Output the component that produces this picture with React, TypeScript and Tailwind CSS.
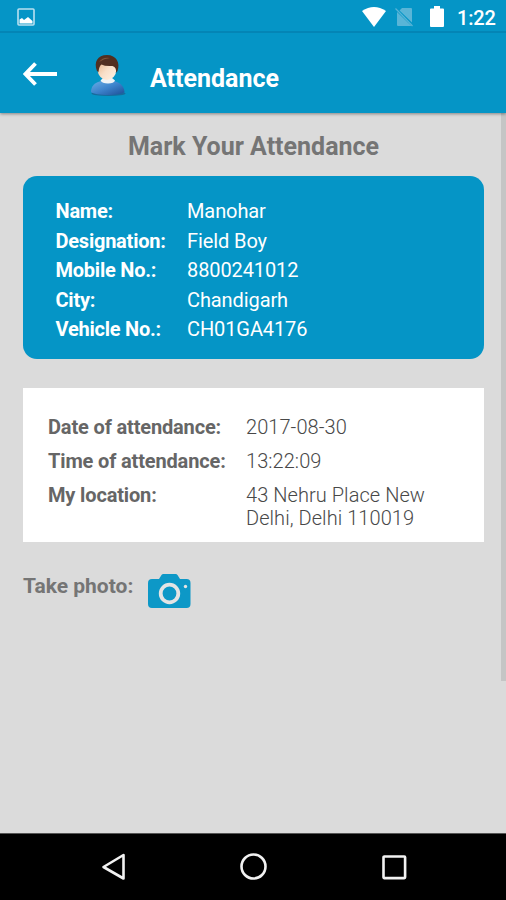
import React from "react";

interface InfoRow {
  title: string;
  value: string;
}

const employee: InfoRow[] = [
  { title: "Name:", value: "Manohar" },
  { title: "Designation:", value: "Field Boy" },
  { title: "Mobile No.:", value: "8800241012" },
  { title: "City:", value: "Chandigarh" },
  { title: "Vehicle No.:", value: "CH01GA4176" },
];

const attendance: InfoRow[] = [
  { title: "Date of attendance:", value: "2017-08-30" },
  { title: "Time of attendance:", value: "13:22:09" },
  { title: "My location:", value: "43 Nehru Place New Delhi, Delhi 110019" },
];

const StatusBar = () => (
  <div className="flex h-[33px] items-center justify-between border-b-2 border-[#0485b5] pl-[17px] pr-[9px] pt-px text-white">
    <svg className="mt-0.5" width="18" height="18" viewBox="0 0 18 18">
      <rect x="1" y="1" width="16" height="16" rx="1" fill="none" stroke="#b9e0f0" strokeWidth="1.6" />
      <path d="M2.500 15.500v-4l2.500-1.500 2 2 4-3 4.500 4v2.500z" fill="#fff" />
    </svg>
    <div className="flex items-center">
      <svg className="mt-px" width="24" height="20" viewBox="0 0 24 20">
        <path d="M0 4Q12-4 24 4L12 20z" fill="#fff" />
      </svg>
      <svg className="ml-[9px] mt-0.5" width="19" height="20" viewBox="0 0 19 20">
        <path d="M7 1h9q1 0 1 1v13.500L4.500 3.500zM2 5l14.500 14H3q-1 0-1-1z" fill="#59b5d7" />
        <path d="M.5 1.500l17 17.500" stroke="#59b5d7" strokeWidth="1.2" />
      </svg>
      <svg className="ml-4 mt-px" width="14" height="21" viewBox="0 0 14 21">
        <path d="M4 0h6v2.500h3q1 0 1 1V20q0 1-1 1H1q-1 0-1-1V3.500q0-1 1-1h3z" fill="#fff" />
      </svg>
      <div className="ml-[13px] w-[40px] whitespace-nowrap pt-[3px] text-[20px] font-medium leading-6 tracking-[-0.2px]">
        1:22
      </div>
    </div>
  </div>
);

const Avatar = () => (
  <svg width="36" height="42" viewBox="0 0 36 42">
    <defs>
      <linearGradient id="shirt" x1="0" y1="0" x2="1" y2="1">
        <stop offset="0" stopColor="#6aaee6" />
        <stop offset=".5" stopColor="#3c82cb" />
        <stop offset="1" stopColor="#1c4e96" />
      </linearGradient>
      <linearGradient id="face" x1="0" y1="0" x2="1" y2="1">
        <stop offset="0" stopColor="#e4ae82" />
        <stop offset=".5" stopColor="#f8dfc8" />
        <stop offset="1" stopColor="#fff3e6" />
      </linearGradient>
    </defs>
    <ellipse cx="18.500" cy="38.500" rx="17" ry="2.500" fill="#176c9c" />
    <path d="M1 37C1 31 5 27.500 11 26h13C30 27.500 34 31 34.500 37 31 41 5 41 1 37z" fill="url(#shirt)" />
    <path d="M10.500 25.500l3-3h8l3.500 3q-1 3-7 3t-7.500-3z" fill="#eef3f6" />
    <ellipse cx="17" cy="15" rx="9.300" ry="10" fill="url(#face)" />
    <path d="M7 16C3.500 7 7.500 0 17 0S30.500 8 27.500 16l-1.700 2Q27 12.500 22.500 11 15 11.500 11.500 9.500 9 11 8.500 17z" fill="#512f20" />
    <path d="M9 7q4-5.500 11-4-6 .5-11 4z" fill="#805439" />
  </svg>
);

const Header = () => (
  <div className="flex h-20 items-center pl-[23px] text-white">
    <svg className="mt-px" width="34" height="24" viewBox="0 0 34 24" fill="none" stroke="#fff" strokeWidth="3.8">
      <path d="M34 12H3M12.500 1.500L2.500 12l10 10.500" />
    </svg>
    <div className="ml-[33px] mt-[5px]">
      <Avatar />
    </div>
    <div className="ml-6 mt-[11px] text-[25px] font-bold leading-8">Attendance</div>
  </div>
);

const NavigationBar = () => (
  <div className="flex h-[67px] items-center justify-between border-t border-[#555] bg-black pl-[101px] pr-[99px]">
    <svg width="25" height="28" viewBox="0 0 25 28" fill="none" stroke="#f2f2f2" strokeWidth="2.6">
      <path d="M22.500 2v23.500L2.500 14z" strokeLinejoin="round" />
    </svg>
    <svg width="28" height="28" viewBox="0 0 28 28" fill="none" stroke="#f2f2f2" strokeWidth="2.600">
      <circle cx="13.500" cy="13.500" r="12" />
    </svg>
    <svg width="25" height="25" viewBox="0 0 25 25" fill="none" stroke="#f2f2f2" strokeWidth="2.600">
      <rect x="1.500" y="1.500" width="21.600" height="21.600" rx=".8" />
    </svg>
  </div>
);

const App = () => {
  return (
    <div className="flex h-[900px] w-[506px] flex-col overflow-hidden bg-[#dbdbdb] font-['Roboto',sans-serif]">
      <div className="z-10 bg-[#0595c6] shadow-[0_1px_3px_rgba(0,0,0,0.4)]">
        <StatusBar />
        <Header />
      </div>

      <div className="relative flex-1 pl-[23px] pr-[22px] text-[#757575]">
        {/* Scrollbar */}
        <div className="absolute right-0 top-0 h-[568px] w-[5px] bg-[#c5c5c5]" />

        <div className="pt-[18px] text-center text-[25px] font-bold leading-8">
          Mark Your Attendance
        </div>

        {/* Employee */}
        <div className="mt-[13px] h-[183px] rounded-[14px] bg-[#0595c6] pl-[32.5px] pt-[21px] text-[20px] leading-[29.5px] text-white">
          {employee.map((item) => (
            <div className="flex" key={item.title}>
              <div className="w-[131.5px] font-bold tracking-[-0.23px]">{item.title}</div>
              <div className="tracking-[-0.1px]">{item.value}</div>
            </div>
          ))}
        </div>

        {/* Attendance */}
        <div className="mt-[29px] flex h-[154px] flex-col gap-[11px] bg-white pl-[25px] pt-7 text-[20px] leading-[23px] text-[#666]">
          {attendance.map((item) => (
            <div className="flex" key={item.title}>
              <div className="w-[198px] font-bold tracking-[-0.15px]">{item.title}</div>
              <div className="w-[200px] font-light tracking-[0.06px] text-[#484848]">{item.value}</div>
            </div>
          ))}
        </div>

        {/* Photo */}
        <div className="mt-8 flex">
          <div className="w-[125px] text-[21px] font-bold leading-6">Take photo:</div>
          <svg width="43" height="35" viewBox="0 0 43 35">
            <path d="M4 5h7l2.500-4q.5-1 2-1h12q1.500 0 2 1L32 5h6.500q4 0 4 4v21q0 4-4 4H4q-4 0-4-4V9q0-4 4-4z" fill="#0d98c7" />
            <circle cx="21.500" cy="19.500" r="8.800" fill="none" stroke="#e4e4e4" strokeWidth="3.800" />
            <circle cx="37.500" cy="12.500" r="1.700" fill="#e4e4e4" />
          </svg>
        </div>
      </div>

      <NavigationBar />
    </div>
  );
};

export default App;
